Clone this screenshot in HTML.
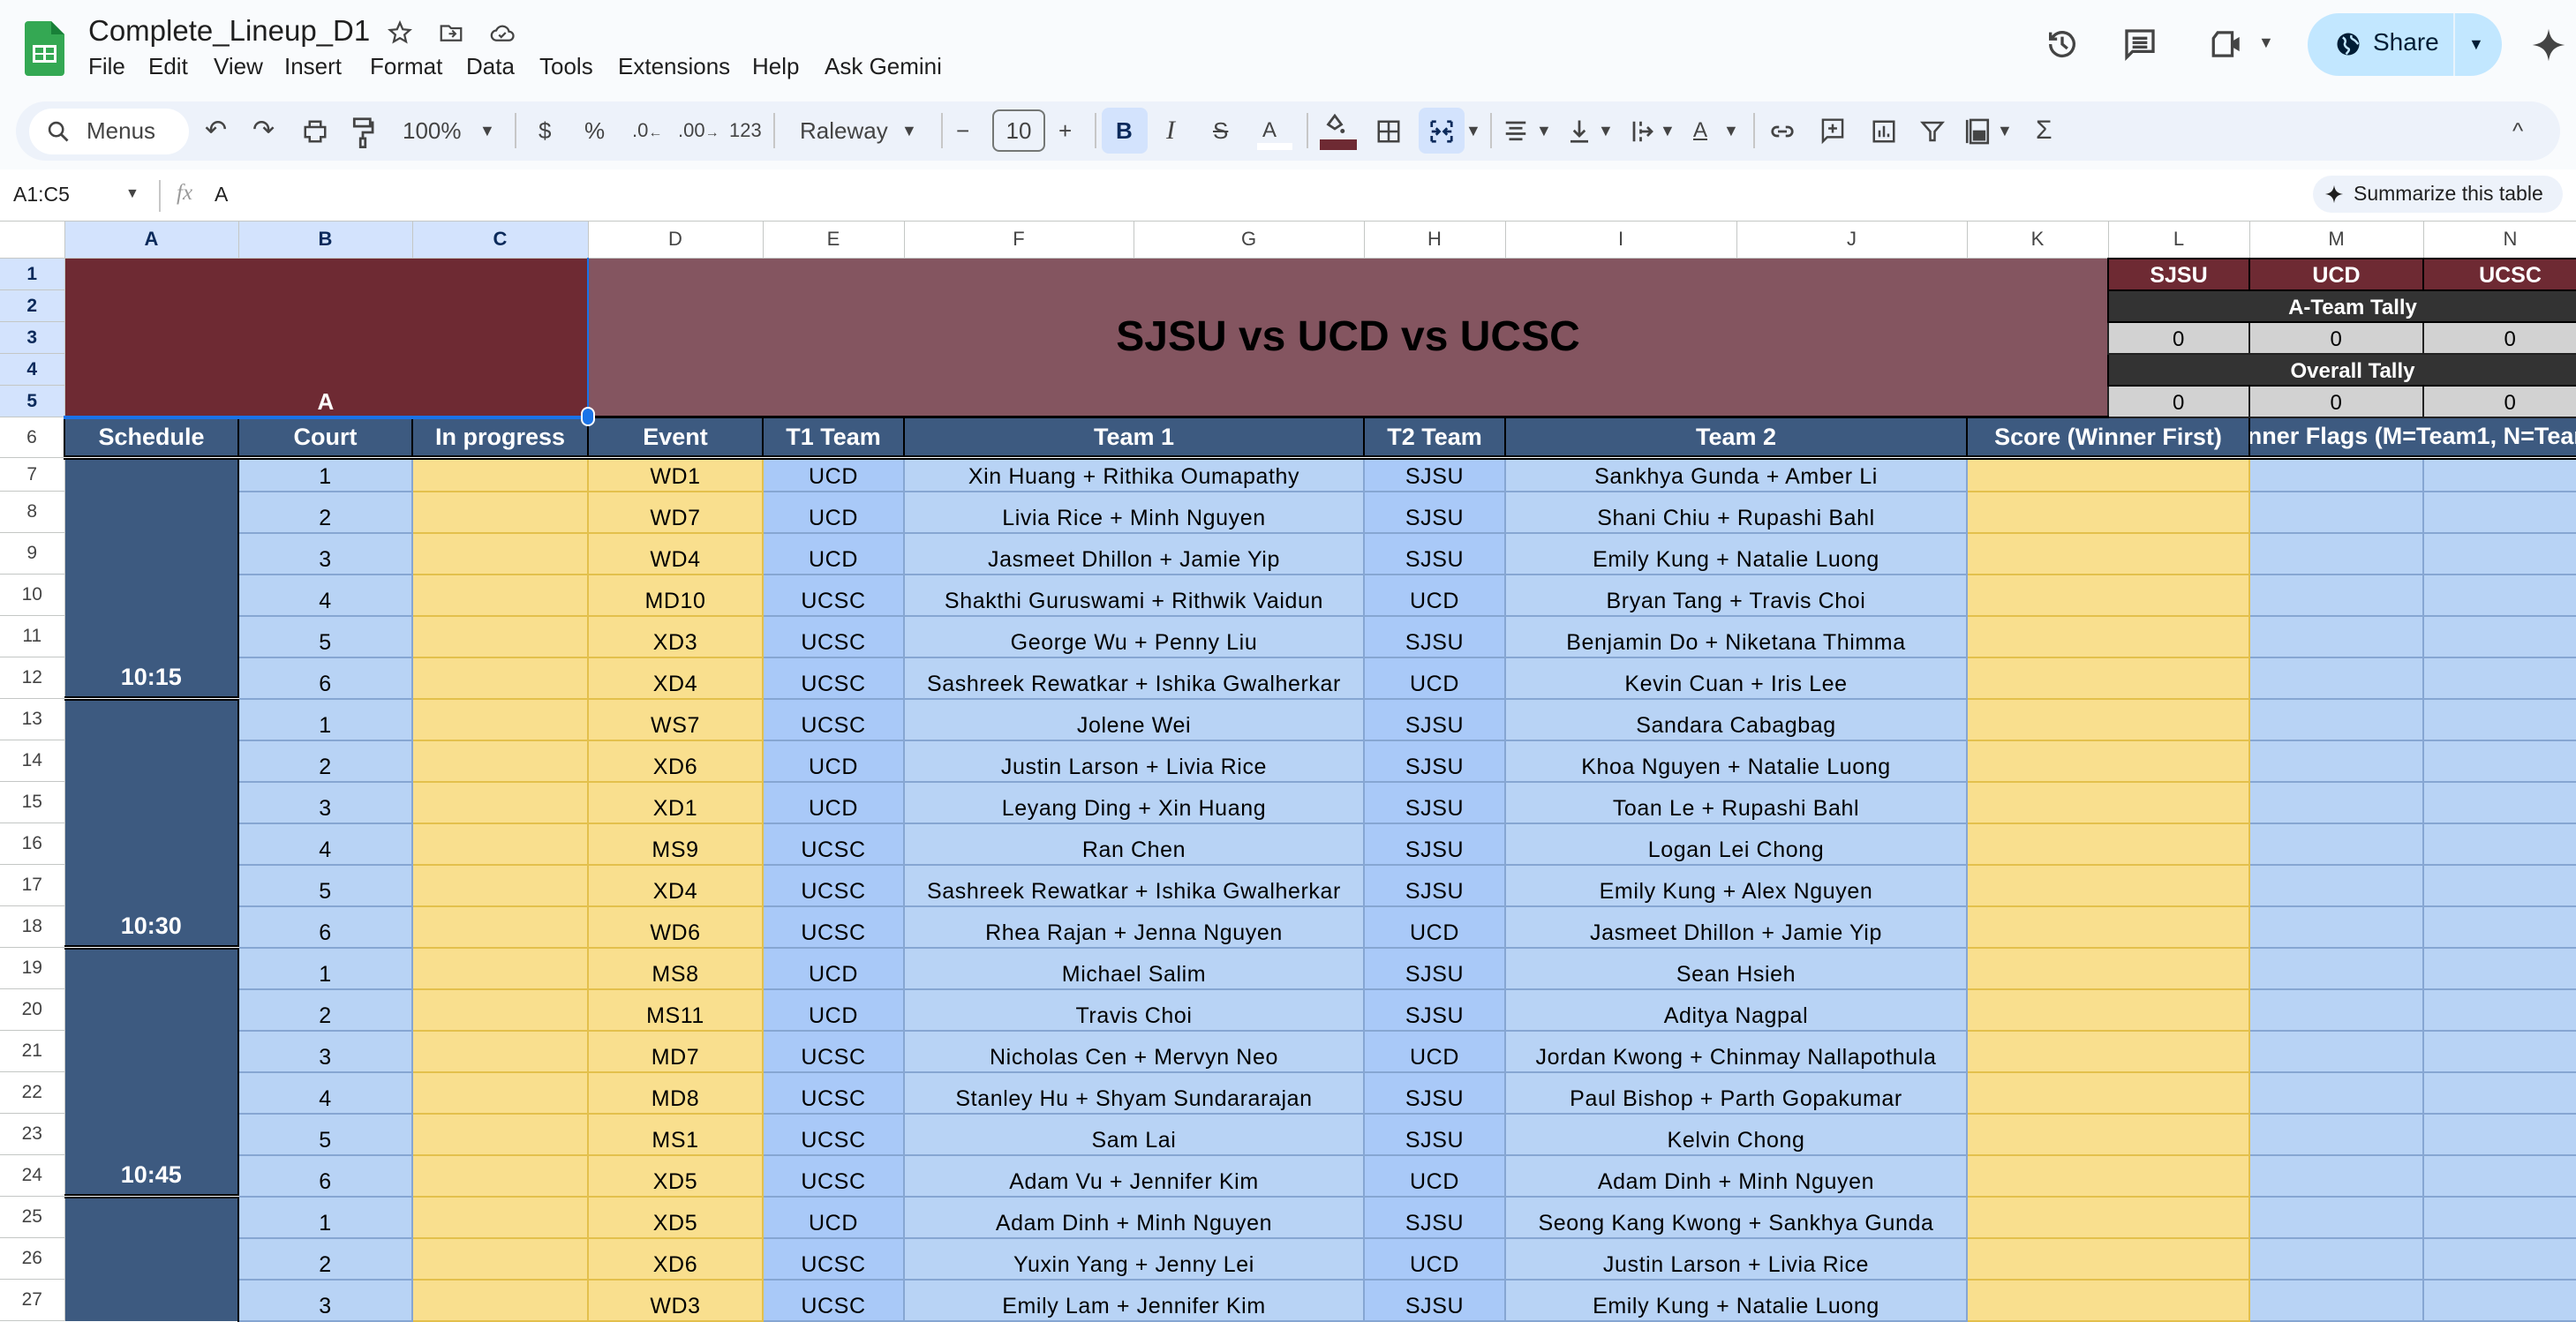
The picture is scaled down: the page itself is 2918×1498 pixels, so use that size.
<!DOCTYPE html>
<html><head><meta charset="utf-8">
<style>
*{box-sizing:border-box;margin:0;padding:0}
body{width:2918px;height:1498px;overflow:hidden;background:#f9fbfd;font-family:"Liberation Sans",sans-serif;position:relative;color:#1f1f1f}
.a{position:absolute;white-space:nowrap}
.menu{top:60px;font-size:26px;color:#1f1f1f}
.tb{top:130px;font-size:26px;color:#444;line-height:36px}
.ic{position:absolute}
.sep{position:absolute;top:128px;width:2px;height:40px;background:#c7c7c7}
.grid{position:absolute;left:0;top:250px;width:2918px;height:1248px;overflow:hidden;background:#fff}
table{border-collapse:collapse;table-layout:fixed;width:2942px}
td{overflow:hidden;white-space:nowrap;text-align:center;vertical-align:bottom;font-size:25px;letter-spacing:.6px;padding:0 2px 1px;color:#000}
tr.ch td{background:#fff;color:#444;font-size:22px;vertical-align:middle;border:1px solid #c4c7c5;letter-spacing:0}
tr.ch td.s{background:#d3e3fd;color:#0b2a5b;font-weight:bold}
td.rn{background:#fff;color:#444;font-size:21px;vertical-align:middle;border:1px solid #c4c7c5;border-left:none;letter-spacing:0;padding:0}
td.rs{background:#d3e3fd;color:#0b2a5b;font-weight:bold}
td.h{background:#3d5a80;color:#fff;font-weight:bold;font-size:27px;letter-spacing:0;border-left:2px solid #000;border-right:2px solid #000;vertical-align:middle;padding-bottom:0}
td.b{background:#b8d3f5;border:2px solid #86a6d2}
td.e{background:#a9c9f8;border:2px solid #86a6d2}
td.y{background:#f9df8e;border:2px solid #e3c04c}
td.sch{background:#3d5a80;color:#fff;font-weight:bold;font-size:27px;border-bottom:5px double #000;border-right:2px solid #000;letter-spacing:0;padding-bottom:6px}
tr.r6 td{border-bottom:5px double #000}
td.t{background:#d2d2d2;border:2px solid #222;font-size:24px}
td.dk{background:#333;color:#fff;font-weight:bold;font-size:24px;border:2px solid #000;letter-spacing:0}
td.mr{background:#6e2a33;color:#fff;font-weight:bold;font-size:25px;border:2px solid #000;letter-spacing:0}
</style></head><body>

<svg class="ic" style="left:28px;top:24px" width="45" height="62" viewBox="0 0 45 62"><path d="M4 0h26l15 15v43a4 4 0 0 1-4 4H4a4 4 0 0 1-4-4V4a4 4 0 0 1 4-4z" fill="#34a853"/><path d="M30 0l15 15H30z" fill="#188038"/><rect x="9" y="27" width="27" height="20" fill="#fff"/><rect x="12" y="30" width="9" height="6" fill="#34a853"/><rect x="24" y="30" width="9" height="6" fill="#34a853"/><rect x="12" y="38" width="9" height="6" fill="#34a853"/><rect x="24" y="38" width="9" height="6" fill="#34a853"/></svg>
<div class="a" style="left:100px;top:16px;font-size:33px;color:#1f1f1f">Complete_Lineup_D1</div>
<svg class="ic" style="left:438px;top:22px" width="30" height="30" viewBox="0 0 24 24"><path d="M12 3l2.6 6 6.4.6-4.9 4.3 1.5 6.3L12 16.9 6.4 20.2l1.5-6.3L3 9.6 9.4 9z" fill="none" stroke="#444" stroke-width="1.8"/></svg>
<svg class="ic" style="left:496px;top:22px" width="30" height="30" viewBox="0 0 24 24"><path d="M3 6h7l2 2h9v11H3z" fill="none" stroke="#444" stroke-width="1.8"/><path d="M10 13h6M13 10l3 3-3 3" fill="none" stroke="#444" stroke-width="1.6"/></svg>
<svg class="ic" style="left:553px;top:22px" width="32" height="30" viewBox="0 0 24 24"><path d="M7 19h11a4 4 0 0 0 0-8 6 6 0 0 0-11.5-1A4.5 4.5 0 0 0 7 19z" fill="none" stroke="#444" stroke-width="1.8"/><path d="M9 14l2 2 4-4" fill="none" stroke="#444" stroke-width="1.8"/></svg>
<div class="a menu" style="left:100px">File</div>
<div class="a menu" style="left:168px">Edit</div>
<div class="a menu" style="left:242px">View</div>
<div class="a menu" style="left:322px">Insert</div>
<div class="a menu" style="left:419px">Format</div>
<div class="a menu" style="left:528px">Data</div>
<div class="a menu" style="left:611px">Tools</div>
<div class="a menu" style="left:700px">Extensions</div>
<div class="a menu" style="left:852px">Help</div>
<div class="a menu" style="left:934px">Ask Gemini</div>

<svg class="ic" style="left:2316px;top:30px" width="40" height="40" viewBox="0 0 24 24"><path d="M4 12a8 8 0 1 0 2.4-5.7L4 8.5M4 4v4.5h4.5" fill="none" stroke="#444" stroke-width="2"/><path d="M12 7v5l3.5 3" fill="none" stroke="#444" stroke-width="2"/></svg>
<svg class="ic" style="left:2404px;top:30px" width="40" height="40" viewBox="0 0 24 24"><path d="M3 3h18v14H7l-4 4z" fill="none" stroke="#444" stroke-width="2"/><path d="M7 8h10M7 11h10M7 14h10" stroke="#444" stroke-width="2"/></svg>
<svg class="ic" style="left:2502px;top:32px" width="40" height="36" viewBox="0 0 24 22"><path d="M6 3h10v16H3V7z" fill="none" stroke="#444" stroke-width="2"/><path d="M16 9l5-3v10l-5-3z" fill="#444"/></svg>
<div class="a" style="left:2558px;top:38px;font-size:18px;color:#444">▼</div>
<div class="a" style="left:2614px;top:15px;width:220px;height:71px;border-radius:36px;background:#c2e7ff"></div>
<div class="a" style="left:2779px;top:15px;width:2px;height:71px;background:#e8f4fc"></div>
<svg class="ic" style="left:2645px;top:35px" width="30" height="30" viewBox="0 0 24 24"><circle cx="12" cy="12" r="10" fill="#001d35"/><path d="M7 6c2 1 3 3 2 5s1 4 3 5-1 4-2 5M15 4c-1 2 0 3 2 4s3 3 4 4" fill="none" stroke="#c2e7ff" stroke-width="2"/></svg>
<div class="a" style="left:2688px;top:32px;font-size:28px;color:#001d35">Share</div>
<div class="a" style="left:2796px;top:40px;font-size:18px;color:#001d35">▼</div>
<svg class="ic" style="left:2867px;top:28px" width="40" height="46" viewBox="0 0 24 24"><path d="M12 1C13 8 16 11 23 12 16 13 13 16 12 23 11 16 8 13 1 12 8 11 11 8 12 1z" fill="#444"/></svg>

<div class="a" style="left:18px;top:115px;width:2882px;height:67px;border-radius:34px;background:#edf2fa"></div>
<div class="a" style="left:33px;top:123px;width:181px;height:52px;border-radius:26px;background:#fff"></div>
<svg class="ic" style="left:52px;top:134px" width="28" height="30" viewBox="0 0 24 24"><circle cx="10" cy="10" r="6.5" fill="none" stroke="#444" stroke-width="2.2"/><path d="M15 15l6 6" stroke="#444" stroke-width="2.4"/></svg>
<div class="a tb" style="left:98px">Menus</div>
<div class="a tb" style="left:232px;font-size:30px">↶</div>
<div class="a tb" style="left:286px;font-size:30px">↷</div>
<svg class="ic" style="left:342px;top:134px" width="30" height="30" viewBox="0 0 24 24"><path d="M7 3h10v5H7zM3 8h18v9h-4v4H7v-4H3z" fill="none" stroke="#444" stroke-width="2"/></svg>
<svg class="ic" style="left:398px;top:132px" width="26" height="36" viewBox="0 0 18 26"><path d="M2 2h13v6H2zM15 5h2v8H9v5M7 18h4v7H7z" fill="none" stroke="#444" stroke-width="2"/></svg>
<div class="a tb" style="left:456px">100%</div>
<div class="a tb" style="left:543px;font-size:18px">▼</div>
<div class="sep" style="left:583px"></div>
<div class="a tb" style="left:610px">$</div>
<div class="a tb" style="left:662px">%</div>
<div class="a tb" style="left:716px;font-size:22px">.0<span style="font-size:16px">←</span></div>
<div class="a tb" style="left:768px;font-size:22px">.00<span style="font-size:16px">→</span></div>
<div class="a tb" style="left:826px;font-size:22px">123</div>
<div class="sep" style="left:876px"></div>
<div class="a tb" style="left:906px">Raleway</div>
<div class="a tb" style="left:1021px;font-size:18px">▼</div>
<div class="sep" style="left:1066px"></div>
<div class="a tb" style="left:1083px">−</div>
<div class="a" style="left:1124px;top:124px;width:60px;height:48px;border:2px solid #747775;border-radius:8px;font-size:26px;text-align:center;line-height:44px;color:#444">10</div>
<div class="a tb" style="left:1199px">+</div>
<div class="sep" style="left:1240px"></div>
<div class="a" style="left:1248px;top:122px;width:52px;height:52px;border-radius:8px;background:#d3e3fd"></div>
<div class="a tb" style="left:1264px;font-weight:bold;color:#0b2a5b">B</div>
<div class="a tb" style="left:1321px;font-style:italic;font-family:'Liberation Serif',serif;font-size:30px">I</div>
<div class="a tb" style="left:1374px;text-decoration:line-through">S</div>
<div class="a tb" style="left:1430px;font-size:24px">A</div>
<div class="a" style="left:1424px;top:162px;width:40px;height:8px;background:#fff"></div>
<div class="sep" style="left:1480px"></div>
<svg class="ic" style="left:1497px;top:126px" width="30" height="30" viewBox="0 0 24 24"><path d="M6 12l6-8 6 8-6 4z" fill="none" stroke="#444" stroke-width="2.2"/><circle cx="19" cy="18" r="2" fill="#444"/></svg>
<div class="a" style="left:1495px;top:158px;width:42px;height:12px;background:#6e2a33"></div>
<svg class="ic" style="left:1558px;top:134px" width="30" height="30" viewBox="0 0 24 24"><path d="M3 3h18v18H3zM12 3v18M3 12h18" fill="none" stroke="#444" stroke-width="2"/></svg>
<div class="a" style="left:1607px;top:122px;width:52px;height:52px;border-radius:8px;background:#d3e3fd"></div>
<svg class="ic" style="left:1618px;top:134px" width="30" height="30" viewBox="0 0 24 24"><path d="M3 3h4M3 3v5M21 3h-4M21 3v5M3 21h4M3 21v-5M21 21h-4M21 21v-5M3 12h7M7 9l3 3-3 3M21 12h-7M17 9l-3 3 3 3" fill="none" stroke="#0b2a5b" stroke-width="2.2"/></svg>
<div class="a tb" style="left:1660px;font-size:18px">▼</div>
<div class="sep" style="left:1688px"></div>
<svg class="ic" style="left:1702px;top:134px" width="30" height="30" viewBox="0 0 24 24"><path d="M3 4h18M6 9h12M3 14h18M6 19h12" stroke="#444" stroke-width="2.2"/></svg>
<div class="a tb" style="left:1740px;font-size:18px">▼</div>
<svg class="ic" style="left:1774px;top:134px" width="30" height="30" viewBox="0 0 24 24"><path d="M12 2v14M7 11l5 5 5-5M4 21h16" fill="none" stroke="#444" stroke-width="2.2"/></svg>
<div class="a tb" style="left:1810px;font-size:18px">▼</div>
<svg class="ic" style="left:1846px;top:134px" width="30" height="30" viewBox="0 0 24 24"><path d="M4 3v18M10 3v4M10 10v4M10 17v4M10 12h10M16 8l4 4-4 4" fill="none" stroke="#444" stroke-width="2.2"/></svg>
<div class="a tb" style="left:1880px;font-size:18px">▼</div>
<div class="a tb" style="left:1918px;font-size:24px;text-decoration:underline">A</div>
<div class="a tb" style="left:1952px;font-size:18px">▼</div>
<div class="sep" style="left:1986px"></div>
<svg class="ic" style="left:2004px;top:134px" width="30" height="30" viewBox="0 0 24 24"><path d="M9 8H7a4 4 0 0 0 0 8h2M15 8h2a4 4 0 0 1 0 8h-2M8 12h8" fill="none" stroke="#444" stroke-width="2.2"/></svg>
<svg class="ic" style="left:2061px;top:132px" width="30" height="32" viewBox="0 0 24 26"><path d="M3 3h18v16H7l-4 4z" fill="none" stroke="#444" stroke-width="2"/><path d="M12 7v8M8 11h8" stroke="#444" stroke-width="2"/></svg>
<svg class="ic" style="left:2119px;top:134px" width="30" height="30" viewBox="0 0 24 24"><path d="M3 3h18v18H3z" fill="none" stroke="#444" stroke-width="2"/><path d="M8 17v-6M12 17V7M16 17v-3" stroke="#444" stroke-width="2"/></svg>
<svg class="ic" style="left:2174px;top:134px" width="30" height="30" viewBox="0 0 24 24"><path d="M3 4h18l-7 8v8h-4v-8z" fill="none" stroke="#444" stroke-width="2"/></svg>
<svg class="ic" style="left:2224px;top:132px" width="32" height="34" viewBox="0 0 24 26"><path d="M3 3v20M6 3h15v20H6z" fill="none" stroke="#444" stroke-width="2"/><path d="M8 12h11v9H8z" fill="#444"/></svg>
<div class="a tb" style="left:2262px;font-size:18px">▼</div>
<div class="a tb" style="left:2306px;font-size:30px">Σ</div>
<div class="a tb" style="left:2846px;font-size:26px">^</div>

<div class="a" style="left:0;top:192px;width:2918px;height:58px;background:#fff"></div>
<div class="a" style="left:15px;top:207px;font-size:23px;color:#1f1f1f">A1:C5</div>
<div class="a" style="left:142px;top:211px;font-size:16px;color:#444">▼</div>
<div class="a" style="left:180px;top:204px;width:2px;height:36px;background:#c7c7c7"></div>
<div class="a" style="left:200px;top:205px;font-size:25px;color:#999;font-style:italic;font-family:'Liberation Serif',serif">fx</div>
<div class="a" style="left:243px;top:207px;font-size:23px;color:#1f1f1f">A</div>
<div class="a" style="left:2620px;top:199px;width:283px;height:42px;border-radius:21px;background:#edf2fa"></div>
<svg class="ic" style="left:2633px;top:208px" width="22" height="24" viewBox="0 0 24 24"><path d="M12 1C13 8 16 11 23 12 16 13 13 16 12 23 11 16 8 13 1 12 8 11 11 8 12 1z" fill="#1f1f1f"/></svg>
<div class="a" style="left:2666px;top:206px;font-size:23px;color:#1f1f1f">Summarize this table</div>

<div class="grid">
<table>
<colgroup><col style="width:73px"><col style="width:197px"><col style="width:197px"><col style="width:199px"><col style="width:198px"><col style="width:160px"><col style="width:260px"><col style="width:261px"><col style="width:160px"><col style="width:262px"><col style="width:261px"><col style="width:160px"><col style="width:160px"><col style="width:197px"><col style="width:197px"></colgroup>
<tr class="ch" style="height:42px"><td style="background:#fff;border-left:none"></td><td class="s">A</td><td class="s">B</td><td class="s">C</td><td>D</td><td>E</td><td>F</td><td>G</td><td>H</td><td>I</td><td>J</td><td>K</td><td>L</td><td>M</td><td>N</td></tr>
<tr style="height:36px"><td class="rn rs">1</td><td colspan="3" rowspan="5" style="background:#6e2a33;color:#fff;font-weight:bold;font-size:26px;border:none;border-right:2px solid #1a73e8;border-bottom:4px solid #1a73e8;padding-bottom:0">A</td><td colspan="8" rowspan="5" style="background:#845560;font-weight:bold;font-size:48px;vertical-align:middle;letter-spacing:0;border-bottom:3px solid #000">SJSU vs UCD vs UCSC</td><td class="mr">SJSU</td><td class="mr">UCD</td><td class="mr">UCSC</td></tr>
<tr style="height:36px"><td class="rn rs">2</td><td colspan="3" class="dk">A-Team Tally</td></tr>
<tr style="height:36px"><td class="rn rs">3</td><td class="t">0</td><td class="t">0</td><td class="t">0</td></tr>
<tr style="height:36px"><td class="rn rs">4</td><td colspan="3" class="dk">Overall Tally</td></tr>
<tr style="height:36px"><td class="rn rs">5</td><td class="t">0</td><td class="t">0</td><td class="t">0</td></tr>
<tr class="r6" style="height:46px"><td class="rn" style="border-bottom:1px solid #c4c7c5">6</td><td class="h">Schedule</td><td class="h">Court</td><td class="h">In progress</td><td class="h">Event</td><td class="h">T1 Team</td><td class="h" colspan="2">Team 1</td><td class="h">T2 Team</td><td class="h" colspan="2">Team 2</td><td class="h" colspan="2">Score (Winner First)</td><td class="h" colspan="2" style="text-align:left;text-indent:-38px">Winner Flags (M=Team1, N=Team2)</td></tr>
<tr style="height:38px"><td class="rn">7</td><td class="sch" rowspan="6">10:15</td><td class="b">1</td><td class="y"></td><td class="y">WD1</td><td class="e">UCD</td><td class="b" colspan="2">Xin Huang + Rithika Oumapathy</td><td class="e">SJSU</td><td class="b" colspan="2">Sankhya Gunda + Amber Li</td><td class="y" colspan="2"></td><td class="b"></td><td class="b"></td></tr>
<tr style="height:47px"><td class="rn">8</td><td class="b">2</td><td class="y"></td><td class="y">WD7</td><td class="e">UCD</td><td class="b" colspan="2">Livia Rice + Minh Nguyen</td><td class="e">SJSU</td><td class="b" colspan="2">Shani Chiu + Rupashi Bahl</td><td class="y" colspan="2"></td><td class="b"></td><td class="b"></td></tr>
<tr style="height:47px"><td class="rn">9</td><td class="b">3</td><td class="y"></td><td class="y">WD4</td><td class="e">UCD</td><td class="b" colspan="2">Jasmeet Dhillon + Jamie Yip</td><td class="e">SJSU</td><td class="b" colspan="2">Emily Kung + Natalie Luong</td><td class="y" colspan="2"></td><td class="b"></td><td class="b"></td></tr>
<tr style="height:47px"><td class="rn">10</td><td class="b">4</td><td class="y"></td><td class="y">MD10</td><td class="e">UCSC</td><td class="b" colspan="2">Shakthi Guruswami + Rithwik Vaidun</td><td class="e">UCD</td><td class="b" colspan="2">Bryan Tang + Travis Choi</td><td class="y" colspan="2"></td><td class="b"></td><td class="b"></td></tr>
<tr style="height:47px"><td class="rn">11</td><td class="b">5</td><td class="y"></td><td class="y">XD3</td><td class="e">UCSC</td><td class="b" colspan="2">George Wu + Penny Liu</td><td class="e">SJSU</td><td class="b" colspan="2">Benjamin Do + Niketana Thimma</td><td class="y" colspan="2"></td><td class="b"></td><td class="b"></td></tr>
<tr style="height:47px"><td class="rn">12</td><td class="b">6</td><td class="y"></td><td class="y">XD4</td><td class="e">UCSC</td><td class="b" colspan="2">Sashreek Rewatkar + Ishika Gwalherkar</td><td class="e">UCD</td><td class="b" colspan="2">Kevin Cuan + Iris Lee</td><td class="y" colspan="2"></td><td class="b"></td><td class="b"></td></tr>
<tr style="height:47px"><td class="rn">13</td><td class="sch" rowspan="6">10:30</td><td class="b">1</td><td class="y"></td><td class="y">WS7</td><td class="e">UCSC</td><td class="b" colspan="2">Jolene Wei</td><td class="e">SJSU</td><td class="b" colspan="2">Sandara Cabagbag</td><td class="y" colspan="2"></td><td class="b"></td><td class="b"></td></tr>
<tr style="height:47px"><td class="rn">14</td><td class="b">2</td><td class="y"></td><td class="y">XD6</td><td class="e">UCD</td><td class="b" colspan="2">Justin Larson + Livia Rice</td><td class="e">SJSU</td><td class="b" colspan="2">Khoa Nguyen + Natalie Luong</td><td class="y" colspan="2"></td><td class="b"></td><td class="b"></td></tr>
<tr style="height:47px"><td class="rn">15</td><td class="b">3</td><td class="y"></td><td class="y">XD1</td><td class="e">UCD</td><td class="b" colspan="2">Leyang Ding + Xin Huang</td><td class="e">SJSU</td><td class="b" colspan="2">Toan Le + Rupashi Bahl</td><td class="y" colspan="2"></td><td class="b"></td><td class="b"></td></tr>
<tr style="height:47px"><td class="rn">16</td><td class="b">4</td><td class="y"></td><td class="y">MS9</td><td class="e">UCSC</td><td class="b" colspan="2">Ran Chen</td><td class="e">SJSU</td><td class="b" colspan="2">Logan Lei Chong</td><td class="y" colspan="2"></td><td class="b"></td><td class="b"></td></tr>
<tr style="height:47px"><td class="rn">17</td><td class="b">5</td><td class="y"></td><td class="y">XD4</td><td class="e">UCSC</td><td class="b" colspan="2">Sashreek Rewatkar + Ishika Gwalherkar</td><td class="e">SJSU</td><td class="b" colspan="2">Emily Kung + Alex Nguyen</td><td class="y" colspan="2"></td><td class="b"></td><td class="b"></td></tr>
<tr style="height:47px"><td class="rn">18</td><td class="b">6</td><td class="y"></td><td class="y">WD6</td><td class="e">UCSC</td><td class="b" colspan="2">Rhea Rajan + Jenna Nguyen</td><td class="e">UCD</td><td class="b" colspan="2">Jasmeet Dhillon + Jamie Yip</td><td class="y" colspan="2"></td><td class="b"></td><td class="b"></td></tr>
<tr style="height:47px"><td class="rn">19</td><td class="sch" rowspan="6">10:45</td><td class="b">1</td><td class="y"></td><td class="y">MS8</td><td class="e">UCD</td><td class="b" colspan="2">Michael Salim</td><td class="e">SJSU</td><td class="b" colspan="2">Sean Hsieh</td><td class="y" colspan="2"></td><td class="b"></td><td class="b"></td></tr>
<tr style="height:47px"><td class="rn">20</td><td class="b">2</td><td class="y"></td><td class="y">MS11</td><td class="e">UCD</td><td class="b" colspan="2">Travis Choi</td><td class="e">SJSU</td><td class="b" colspan="2">Aditya Nagpal</td><td class="y" colspan="2"></td><td class="b"></td><td class="b"></td></tr>
<tr style="height:47px"><td class="rn">21</td><td class="b">3</td><td class="y"></td><td class="y">MD7</td><td class="e">UCSC</td><td class="b" colspan="2">Nicholas Cen + Mervyn Neo</td><td class="e">UCD</td><td class="b" colspan="2">Jordan Kwong + Chinmay Nallapothula</td><td class="y" colspan="2"></td><td class="b"></td><td class="b"></td></tr>
<tr style="height:47px"><td class="rn">22</td><td class="b">4</td><td class="y"></td><td class="y">MD8</td><td class="e">UCSC</td><td class="b" colspan="2">Stanley Hu + Shyam Sundararajan</td><td class="e">SJSU</td><td class="b" colspan="2">Paul Bishop + Parth Gopakumar</td><td class="y" colspan="2"></td><td class="b"></td><td class="b"></td></tr>
<tr style="height:47px"><td class="rn">23</td><td class="b">5</td><td class="y"></td><td class="y">MS1</td><td class="e">UCSC</td><td class="b" colspan="2">Sam Lai</td><td class="e">SJSU</td><td class="b" colspan="2">Kelvin Chong</td><td class="y" colspan="2"></td><td class="b"></td><td class="b"></td></tr>
<tr style="height:47px"><td class="rn">24</td><td class="b">6</td><td class="y"></td><td class="y">XD5</td><td class="e">UCSC</td><td class="b" colspan="2">Adam Vu + Jennifer Kim</td><td class="e">UCD</td><td class="b" colspan="2">Adam Dinh + Minh Nguyen</td><td class="y" colspan="2"></td><td class="b"></td><td class="b"></td></tr>
<tr style="height:47px"><td class="rn">25</td><td class="sch" rowspan="3" style="border-bottom:none"></td><td class="b">1</td><td class="y"></td><td class="y">XD5</td><td class="e">UCD</td><td class="b" colspan="2">Adam Dinh + Minh Nguyen</td><td class="e">SJSU</td><td class="b" colspan="2">Seong Kang Kwong + Sankhya Gunda</td><td class="y" colspan="2"></td><td class="b"></td><td class="b"></td></tr>
<tr style="height:47px"><td class="rn">26</td><td class="b">2</td><td class="y"></td><td class="y">XD6</td><td class="e">UCSC</td><td class="b" colspan="2">Yuxin Yang + Jenny Lei</td><td class="e">UCD</td><td class="b" colspan="2">Justin Larson + Livia Rice</td><td class="y" colspan="2"></td><td class="b"></td><td class="b"></td></tr>
<tr style="height:47px"><td class="rn">27</td><td class="b">3</td><td class="y"></td><td class="y">WD3</td><td class="e">UCSC</td><td class="b" colspan="2">Emily Lam + Jennifer Kim</td><td class="e">SJSU</td><td class="b" colspan="2">Emily Kung + Natalie Luong</td><td class="y" colspan="2"></td><td class="b"></td><td class="b"></td></tr>
</table>
</div>
<div class="a" style="left:658px;top:461px;width:16px;height:22px;border-radius:8px;background:#1a73e8;border:2px solid #fff"></div>
</body></html>
